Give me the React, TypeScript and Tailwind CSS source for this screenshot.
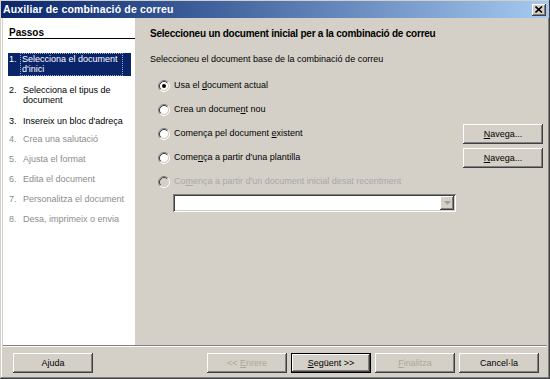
import React from "react";

const raised =
  "shadow-[inset_-1px_-1px_#404040,inset_1px_1px_#ffffff,inset_-2px_-2px_#808080,inset_2px_2px_#d4d0c8]";
const raisedDefault =
  "shadow-[inset_-1px_-1px_#000000,inset_1px_1px_#000000,inset_-2px_-2px_#404040,inset_2px_2px_#ffffff,inset_-3px_-3px_#808080]";
const sunken =
  "shadow-[inset_1px_1px_#808080,inset_-1px_-1px_#ffffff,inset_2px_2px_#404040,inset_-2px_-2px_#d4d0c8]";

function Radio({ checked, disabled }: { checked?: boolean; disabled?: boolean }) {
  return (
    <svg width="12" height="12" viewBox="0 0 12 12" className="shrink-0">
      <circle cx="6" cy="6" r="4.2" fill={disabled ? "#d4d0c8" : "#ffffff"} />
      <path d="M2.11 9.89 A5.5 5.5 0 0 1 9.89 2.11" fill="none" stroke="#808080" strokeWidth="1" />
      <path d="M9.89 2.11 A5.5 5.5 0 0 1 2.11 9.89" fill="none" stroke="#ffffff" strokeWidth="1" />
      <path d="M2.82 9.18 A4.5 4.5 0 0 1 9.18 2.82" fill="none" stroke="#404040" strokeWidth="1" />
      <path d="M9.18 2.82 A4.5 4.5 0 0 1 2.82 9.18" fill="none" stroke="#d4d0c8" strokeWidth="1" />
      {checked && <circle cx="6" cy="6" r="2" fill="#000000" />}
    </svg>
  );
}

function Btn({
  children,
  disabled,
  isDefault,
}: {
  children: React.ReactNode;
  disabled?: boolean;
  isDefault?: boolean;
}) {
  return (
    <button
      className={`w-[80px] h-[20px] bg-[#d4d0c8] flex items-center justify-center text-[9px] leading-none ${
        isDefault ? raisedDefault : raised
      } ${disabled ? "text-[#aca899]" : "text-black"}`}
    >
      <span className="whitespace-pre">{children}</span>
    </button>
  );
}

const steps = [
  { n: "1.", lines: ["Selecciona el document", "d'inici"], mt: "mt-[14px]", active: true },
  { n: "2.", lines: ["Selecciona el tipus de", "document"], mt: "mt-[9px]" },
  { n: "3.", lines: ["Insereix un bloc d'adreça"], mt: "mt-[11px]" },
  { n: "4.", lines: ["Crea una salutació"], mt: "mt-[8px]", off: true },
  { n: "5.", lines: ["Ajusta el format"], mt: "mt-[10px]", off: true },
  { n: "6.", lines: ["Edita el document"], mt: "mt-[10px]", off: true },
  { n: "7.", lines: ["Personalitza el document"], mt: "mt-[10px]", off: true },
  { n: "8.", lines: ["Desa, imprimeix o envia"], mt: "mt-[10px]", off: true },
];

export default function App() {
  return (
    <div
      className="w-[550px] h-[379px] bg-[#d4d0c8] p-[1px] flex flex-col font-['Liberation_Sans',Arial,sans-serif] shadow-[inset_-1px_-1px_#404040,inset_1px_1px_#d4d0c8,inset_-2px_-2px_#808080,inset_2px_2px_#ffffff] select-none"
    >
      {/* title bar */}
      <div className="h-[17px] flex items-center justify-between bg-gradient-to-r from-[#0a246a] to-[#a6caf0] pl-[2px] pr-[3px]">
        <span className="text-white font-bold text-[10.5px] tracking-[0.15px] leading-none">
          Auxiliar de combinació de correu
        </span>
        <div
          className={`w-[14px] h-[12px] bg-[#d4d0c8] flex items-center justify-center ${raised}`}
        >
          <svg width="8" height="7" viewBox="0 0 8 7">
            <path d="M0.5 0.5 L7 6.5 M7 0.5 L0.5 6.5" stroke="#000" strokeWidth="1.6" />
          </svg>
        </div>
      </div>

      <div className="flex-1 flex flex-col px-[2px] pb-[2px]">
        <div className="h-[327px] flex">
          {/* steps */}
          <div className="w-[132px] bg-white flex flex-col">
            <div className="ml-[5px] h-[21px] pt-[9px] pl-[1px] border-b border-black text-[10px] leading-[11px] font-bold text-black">
              Passos
            </div>
            <div className="ml-[5px] mr-[4px] flex flex-col">
              {steps.map((s) => (
                <div
                  key={s.n}
                  className={`${s.mt} flex text-[9px] leading-[10px] ${
                    s.active ? "bg-[#0a246a] text-white h-[23px] py-[1px]" : s.off ? "text-[#8c8c8c]" : "text-black"
                  }`}
                >
                  <span className="w-[14px] pl-[1px] shrink-0">{s.n}</span>
                  <span
                    className={`pr-[4px] pl-[1px] ${
                      s.active ? "outline outline-1 outline-dotted outline-[#9aa6c8] -ml-[1px]" : ""
                    }`}
                  >
                    {s.lines.map((l) => (
                      <div key={l}>{l}</div>
                    ))}
                  </span>
                </div>
              ))}
            </div>
          </div>

          {/* content */}
          <div className="flex-1 flex flex-col pl-[15px] pr-[4px] pt-[10px] text-[9px] text-black">
            <div className="font-bold text-[10px] tracking-[-0.23px] leading-[12px]">
              Seleccioneu un document inicial per a la combinació de correu
            </div>
            <div className="mt-[13px] leading-[12px]">Seleccioneu el document base de la combinació de correu</div>

            <div className="mt-[9px] flex flex-col pl-[8px]">
              <div className="h-[24px] flex items-center gap-[4px]">
                <Radio checked />
                <span>
                  Usa el <u>d</u>ocument actual
                </span>
              </div>
              <div className="h-[24px] flex items-center gap-[4px]">
                <Radio />
                <span>
                  Crea un docume<u>n</u>t nou
                </span>
              </div>
              <div className="h-[24px] flex items-center gap-[4px]">
                <Radio />
                <span className="flex-1">
                  Comença pel document <u>e</u>xistent
                </span>
                <Btn>
                  <u>N</u>avega...
                </Btn>
              </div>
              <div className="h-[24px] flex items-center gap-[4px]">
                <Radio />
                <span className="flex-1">
                  Come<u>n</u>ça a partir d'una plantilla
                </span>
                <Btn>
                  <u>N</u>avega...
                </Btn>
              </div>
              <div className="h-[24px] flex items-center gap-[4px] text-[#a8a8a8]">
                <Radio disabled />
                <span>
                  Co<u>m</u>ença a partir d'un document inicial desat recentment
                </span>
              </div>
              <div className={`ml-[15px] w-[283px] h-[18px] bg-white p-[2px] flex justify-end ${sunken}`}>
                <div className={`w-[14px] h-full bg-[#d4d0c8] flex items-center justify-center ${raised}`}>
                  <svg width="7" height="4" viewBox="0 0 7 4">
                    <path d="M0 0 H7 L3.5 4 Z" fill="#a0a0a0" />
                  </svg>
                </div>
              </div>
            </div>
          </div>
        </div>

        <div className="h-[2px] border-t border-[#808080] border-b border-b-white" />

        <div className="flex-1 flex pt-[6px] pl-[10px] pr-[8px] items-start">
          <Btn>
            A<u>j</u>uda
          </Btn>
          <div className="flex-1" />
          <div className="flex gap-[4px]">
            <Btn disabled>
              {"<< "}
              <u>E</u>nrere
            </Btn>
            <Btn isDefault>
              <u>S</u>egüent {">>"}
            </Btn>
            <Btn disabled>
              <u>F</u>inalitza
            </Btn>
            <Btn>Cancel·la</Btn>
          </div>
        </div>
      </div>
    </div>
  );
}
